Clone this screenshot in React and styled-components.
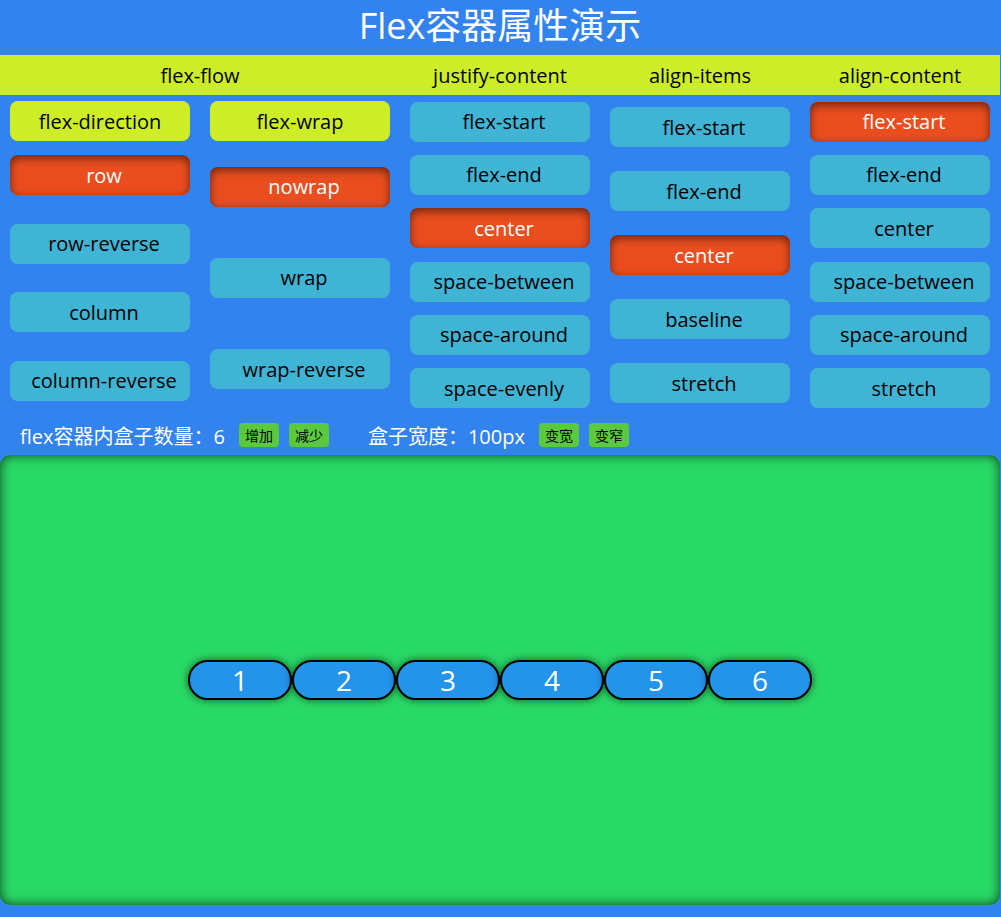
import React from 'react'
import styled, { createGlobalStyle } from 'styled-components'

const GlobalStyle = createGlobalStyle`
  html, body {
    margin: 0;
    padding: 0;
    background: #3383ef;
    font-family: "Open Sans", "Noto Sans CJK SC", sans-serif;
  }
`;

const Page = styled.div`
  width: 1000px;
  padding-bottom: 12px;
`;

const Title = styled.h1`
  margin: 0;
  height: 55px;
  line-height: 52px;
  text-align: center;
  color: #fff;
  font-size: 36px;
  font-weight: normal;
`;

const HeadBar = styled.div`
  display: grid;
  grid-template-columns: 400px 200px 200px 200px;
  height: 40px;
  background: #cdee26;
`;

const HeadCell = styled.div`
  display: flex;
  align-items: center;
  justify-content: center;
  font-size: 20px;
  color: #000;
`;

const Body = styled.div`
  display: grid;
  grid-template-columns: repeat(5, 200px);
  height: 320px;
`;

const Column = styled.div`
  display: flex;
  flex-direction: column;
`;

const SubHead = styled.div`
  height: 40px;
  margin: 6px 10px 0;
  border-radius: 8px;
  background: #cdee26;
  display: flex;
  align-items: center;
  justify-content: center;
  font-size: 20px;
  color: #000;
`;

const List = styled.div`
  flex: 1;
  display: flex;
  flex-direction: column;
  justify-content: space-around;
  padding: 0 10px;
`;

const Option = styled.div`
  height: 40px;
  border-radius: 8px;
  box-sizing: border-box;
  padding-left: 8px;
  display: flex;
  align-items: center;
  justify-content: center;
  font-size: 20px;
  cursor: pointer;
  background: ${p => (p.$active ? '#ea4e1f' : '#40b4d4')};
  color: ${p => (p.$active ? '#fff' : '#000')};
  box-shadow: ${p => (p.$active ? 'inset 0 3px 10px rgba(0,0,0,0.55)' : 'none')};
`;

const InfoRow = styled.div`
  height: 40px;
  display: flex;
  align-items: center;
  padding-left: 20px;
  color: #fff;
  font-size: 20px;
`;

const InfoText = styled.span`
  margin-left: ${p => p.$gap || 0}px;
`;

const SmallBtn = styled.button`
  height: 24px;
  width: 40px;
  padding: 0;
  margin-left: ${p => p.$gap}px;
  border: none;
  border-radius: 4px;
  background: #5ac93e;
  color: #000;
  font-family: inherit;
  font-size: 14px;
  cursor: pointer;
`;

const Stage = styled.div`
  height: 450px;
  border-radius: 10px;
  background: #29d966;
  box-shadow: inset 0 0 12px rgba(0,0,0,0.7);
  display: flex;
  flex-direction: row;
  flex-wrap: nowrap;
  justify-content: center;
  align-items: center;
  align-content: flex-start;
`;

const Box = styled.div`
  width: ${p => p.$w}px;
  height: 36px;
  border: 2px solid #000;
  border-radius: 20px;
  background: #2493ea;
  color: #fff;
  font-size: 28px;
  display: flex;
  align-items: center;
  justify-content: center;
  box-shadow: 0 0 8px rgba(0,0,0,0.6);
`;

const groups = [
  { head: 'flex-direction', opts: ['row', 'row-reverse', 'column', 'column-reverse'], active: 'row' },
  { head: 'flex-wrap', opts: ['nowrap', 'wrap', 'wrap-reverse'], active: 'nowrap' },
  { opts: ['flex-start', 'flex-end', 'center', 'space-between', 'space-around', 'space-evenly'], active: 'center' },
  { opts: ['flex-start', 'flex-end', 'center', 'baseline', 'stretch'], active: 'center' },
  { opts: ['flex-start', 'flex-end', 'center', 'space-between', 'space-around', 'stretch'], active: 'flex-start' },
];

export default function App() {
  const [count, setCount] = React.useState(6);
  const [width, setWidth] = React.useState(100);

  return (
    <Page>
      <GlobalStyle />
      <Title>Flex容器属性演示</Title>
      <HeadBar>
        <HeadCell>flex-flow</HeadCell>
        <HeadCell>justify-content</HeadCell>
        <HeadCell>align-items</HeadCell>
        <HeadCell>align-content</HeadCell>
      </HeadBar>
      <Body>
        {groups.map((g, i) => (
          <Column key={i}>
            {g.head && <SubHead>{g.head}</SubHead>}
            <List>
              {g.opts.map(o => (
                <Option key={o} $active={o === g.active}>{o}</Option>
              ))}
            </List>
          </Column>
        ))}
      </Body>
      <InfoRow>
        <InfoText>flex容器内盒子数量：{count}</InfoText>
        <SmallBtn $gap={14} onClick={() => setCount(count + 1)}>增加</SmallBtn>
        <SmallBtn $gap={10} onClick={() => setCount(Math.max(0, count - 1))}>减少</SmallBtn>
        <InfoText $gap={39}>盒子宽度：{width}px</InfoText>
        <SmallBtn $gap={14} onClick={() => setWidth(width + 10)}>变宽</SmallBtn>
        <SmallBtn $gap={10} onClick={() => setWidth(Math.max(10, width - 10))}>变窄</SmallBtn>
      </InfoRow>
      <Stage>
        {Array.from({ length: count }, (_, i) => (
          <Box key={i} $w={width}>{i + 1}</Box>
        ))}
      </Stage>
    </Page>
  );
}
